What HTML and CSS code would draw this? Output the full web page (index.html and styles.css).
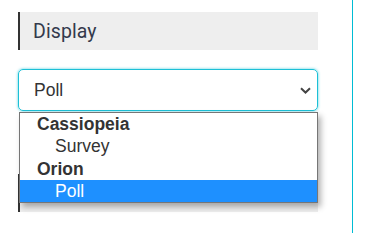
FILE: index.html
```html
<!DOCTYPE html>
<html>
<head>
<meta charset="utf-8">
<link rel="stylesheet" href="styles.css">
</head>
<body>
<div class="layout">
  <div class="col">
    <div class="heading">Display</div>
    <div class="select">
      <span class="value">Poll</span>
      <svg class="chev" width="11" height="7" viewBox="0 0 11 7"><path d="M1 1.2 L5.5 5.5 L10 1.2" fill="none" stroke="#444" stroke-width="2"/></svg>
      <div class="dropdown">
        <div class="group">Cassiopeia</div>
        <div class="option">Survey</div>
        <div class="group">Orion</div>
        <div class="option selected">Poll</div>
      </div>
    </div>
    <div class="heading second">Display</div>
  </div>
</div>
</body>
</html>
```
FILE: styles.css
```css
html, body {
  margin: 0;
  padding: 0;
  background: #fff;
}
.layout {
  display: flex;
  height: 233px;
}
.col {
  width: 353px;
  box-sizing: border-box;
  border-right: 1px solid #00bcd4;
  padding: 12px 0 0 18px;
}
.heading {
  width: 300px;
  height: 38px;
  box-sizing: border-box;
  background: #eeeeee;
  border-left: 2px solid #333;
  padding: 1px 0 0 13px;
  display: flex;
  align-items: center;
  font-family: Roboto, sans-serif;
  font-size: 19.5px;
  letter-spacing: 0.1px;
  color: #343a4c;
}
.heading.second {
  margin-top: 63px;
  padding: 0 0 2px 13px;
}
.select {
  position: relative;
  margin-top: 19px;
  width: 300px;
  height: 42px;
  box-sizing: border-box;
  border: 1px solid #1cc0d6;
  border-radius: 5px;
  box-shadow: 0 0 3px rgba(0, 188, 212, 0.7);
  display: flex;
  align-items: center;
  justify-content: space-between;
  padding: 0 6px 0 15px;
  font-family: "Liberation Sans", Arial, sans-serif;
  font-size: 17.5px;
  color: #333;
}
.chev {
  display: block;
}
.dropdown {
  position: absolute;
  top: 42px;
  left: 0;
  width: 299px;
  box-sizing: border-box;
  background: #fff;
  border: 1px solid #767676;
  box-shadow: 3px 4px 6px rgba(0, 0, 0, 0.3);
  font-family: "Liberation Sans", Arial, sans-serif;
  font-size: 17.5px;
  color: #333;
  z-index: 2;
}
.group, .option {
  height: 22.25px;
  line-height: 22px;
  white-space: nowrap;
}
.group {
  font-weight: bold;
  padding-left: 17px;
}
.option {
  padding-left: 35px;
}
.option.selected {
  background: #1e90ff;
  color: #fff;
}
```
